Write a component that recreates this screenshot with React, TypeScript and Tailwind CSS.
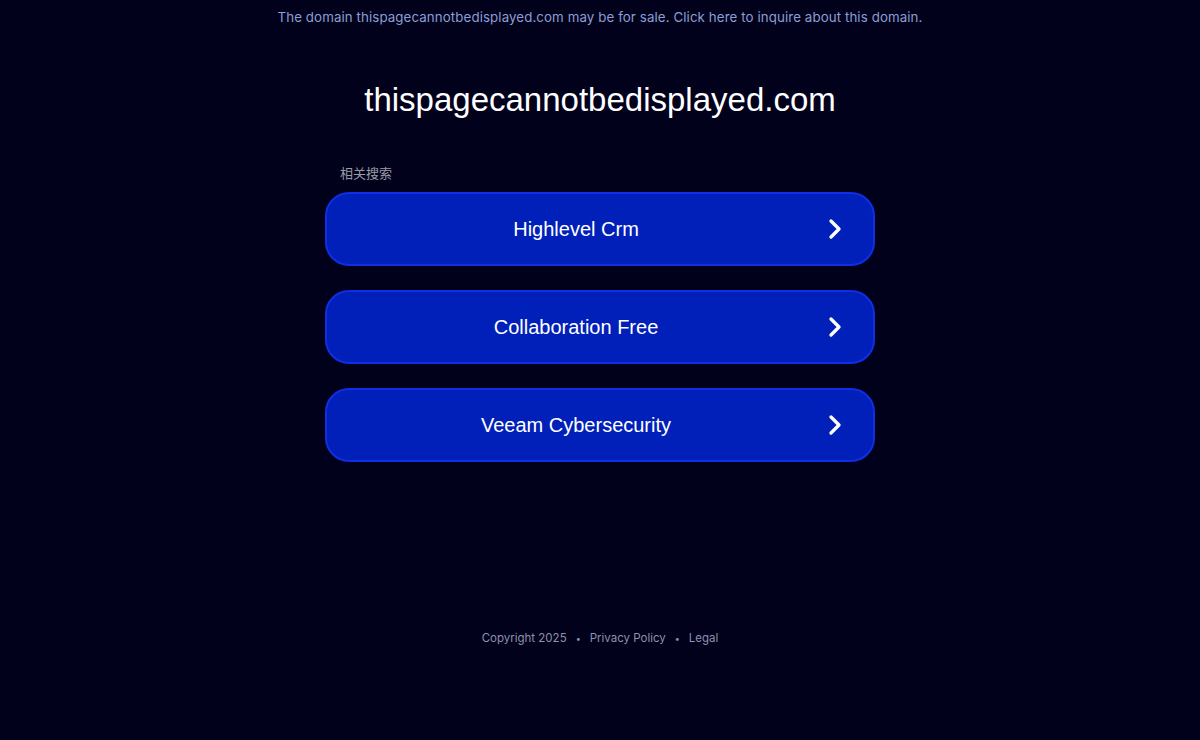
import { ChevronRight } from "lucide-react";

const searches = ["Highlevel Crm", "Collaboration Free", "Veeam Cybersecurity"];

export default function App() {
  return (
    <div className="min-h-[740px] w-full bg-[#01011c] flex flex-col items-center font-['Inter',sans-serif]">
      <a className="mt-[9px] text-[13.3px] leading-[16px] text-[#8c9ed3] tracking-[0.1px]">
        The domain thispagecannotbedisplayed.com may be for sale. Click here to inquire about this domain.
      </a>

      <h1 className="mt-[55px] text-[33px] leading-[40px] text-white font-['Liberation_Sans',Arial,sans-serif]">
        thispagecannotbedisplayed.com
      </h1>

      <div className="mt-[46px] w-[550px] flex flex-col">
        <p className="pl-[15px] text-[13px] leading-[16px] text-[#9a9aa6] font-['Liberation_Sans','Noto_Sans_CJK_SC',sans-serif]">
          相关搜索
        </p>
        <div className="mt-[10px] flex flex-col gap-[24px]">
          {searches.map((s) => (
            <a
              key={s}
              className="h-[74px] rounded-[24px] bg-[#0020b9] border-2 border-[#0f2ee6] flex items-center pr-[22px]"
            >
              <span className="flex-1 text-center pl-[48px] pr-[42px] text-[20px] text-white font-['Liberation_Sans',Arial,sans-serif]">
                {s}
              </span>
              <ChevronRight size={32} strokeWidth={2.5} className="text-white shrink-0" />
            </a>
          ))}
        </div>
      </div>

      <div className="mt-[168px] flex items-center gap-[9px] text-[11.5px] text-[#8f90ac]">
        <span>Copyright 2025</span>
        <span className="text-[9px]">•</span>
        <span>Privacy Policy</span>
        <span className="text-[9px]">•</span>
        <span>Legal</span>
      </div>
    </div>
  );
}
